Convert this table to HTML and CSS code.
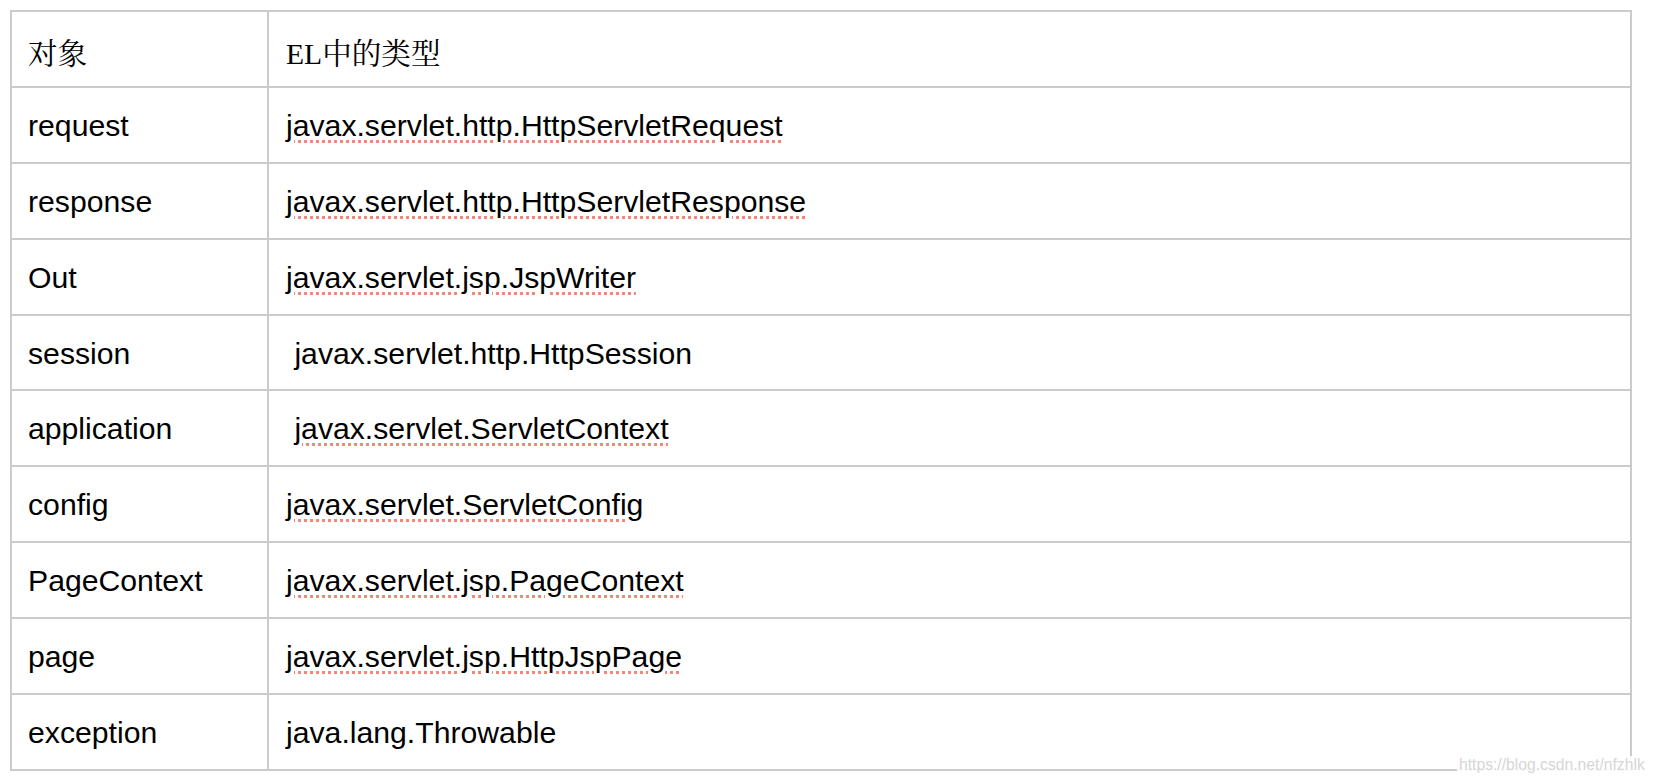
FILE: index.html
```html
<!DOCTYPE html>
<html lang="zh">
<head>
<meta charset="utf-8">
<title>EL 隐式对象类型</title>
<link rel="stylesheet" href="styles.css">
</head>
<body>
<div class="page">
  <table class="grid">
    <tbody>
      <tr class="head">
        <td class="c1">对象</td>
        <td class="c2">EL中的类型</td>
      </tr>
      <tr><td class="c1">request</td><td class="c2"><span class="sp">javax.servlet.http.HttpServletRequest</span></td></tr>
      <tr><td class="c1">response</td><td class="c2"><span class="sp">javax.servlet.http.HttpServletResponse</span></td></tr>
      <tr><td class="c1">Out</td><td class="c2"><span class="sp">javax.servlet.jsp.JspWriter</span></td></tr>
      <tr><td class="c1">session</td><td class="c2">&nbsp;javax.servlet.http.HttpSession</td></tr>
      <tr><td class="c1">application</td><td class="c2">&nbsp;<span class="sp">javax.servlet.ServletContext</span></td></tr>
      <tr><td class="c1">config</td><td class="c2"><span class="sp">javax.servlet.ServletConfig</span></td></tr>
      <tr><td class="c1">PageContext</td><td class="c2"><span class="sp">javax.servlet.jsp.PageContext</span></td></tr>
      <tr><td class="c1">page</td><td class="c2"><span class="sp">javax.servlet.jsp.HttpJspPage</span></td></tr>
      <tr><td class="c1">exception</td><td class="c2">java.lang.Throwable</td></tr>
    </tbody>
  </table>
  <div class="watermark">https://blog.csdn.net/nfzhlk</div>
</div>
</body>
</html>
```

FILE: styles.css
```css
html, body {
  margin: 0;
  padding: 0;
  background: #ffffff;
}

.page {
  position: relative;
  padding: 10px 0 0 10px;
  width: 1654px;
  height: 784px;
  box-sizing: border-box;
}

.grid {
  border-collapse: separate;
  border-spacing: 0;
  border-top: 2px solid #cbcbcb;
  border-left: 2px solid #cbcbcb;
  width: 1622px;
  table-layout: fixed;
  font-family: "Liberation Sans", Arial, Helvetica, sans-serif;
  font-size: 30.2px;
  color: #000;
}

.grid td {
  border-right: 2px solid #cbcbcb;
  border-bottom: 2px solid #cbcbcb;
  height: 75.9px;
  box-sizing: border-box;
  padding: 2px 0 0 0;
  vertical-align: middle;
  white-space: nowrap;
  line-height: normal;
}

.grid td.c1 {
  width: 257px;
  padding-left: 16px;
}

.grid td.c2 {
  padding-left: 17px;
}

.grid tr.head td {
  font-family: "Liberation Serif", "Times New Roman", "Noto Serif CJK SC", "Noto Sans CJK SC", serif;
  font-size: 29.6px;
  padding-top: 4px;
}

.sp {
  text-decoration-line: underline;
  text-decoration-style: dotted;
  text-decoration-color: #f2877c;
  text-decoration-thickness: 3px;
  text-underline-offset: 4px;
}

.watermark {
  position: absolute;
  left: 1457px;
  top: 756px;
  padding: 0 0 0 2px;
  font-family: "Liberation Sans", Arial, sans-serif;
  font-size: 15.7px;
  line-height: 18px;
  color: #d6d6d6;
  background: rgba(255, 255, 255, 0.92);
  white-space: nowrap;
}
```
